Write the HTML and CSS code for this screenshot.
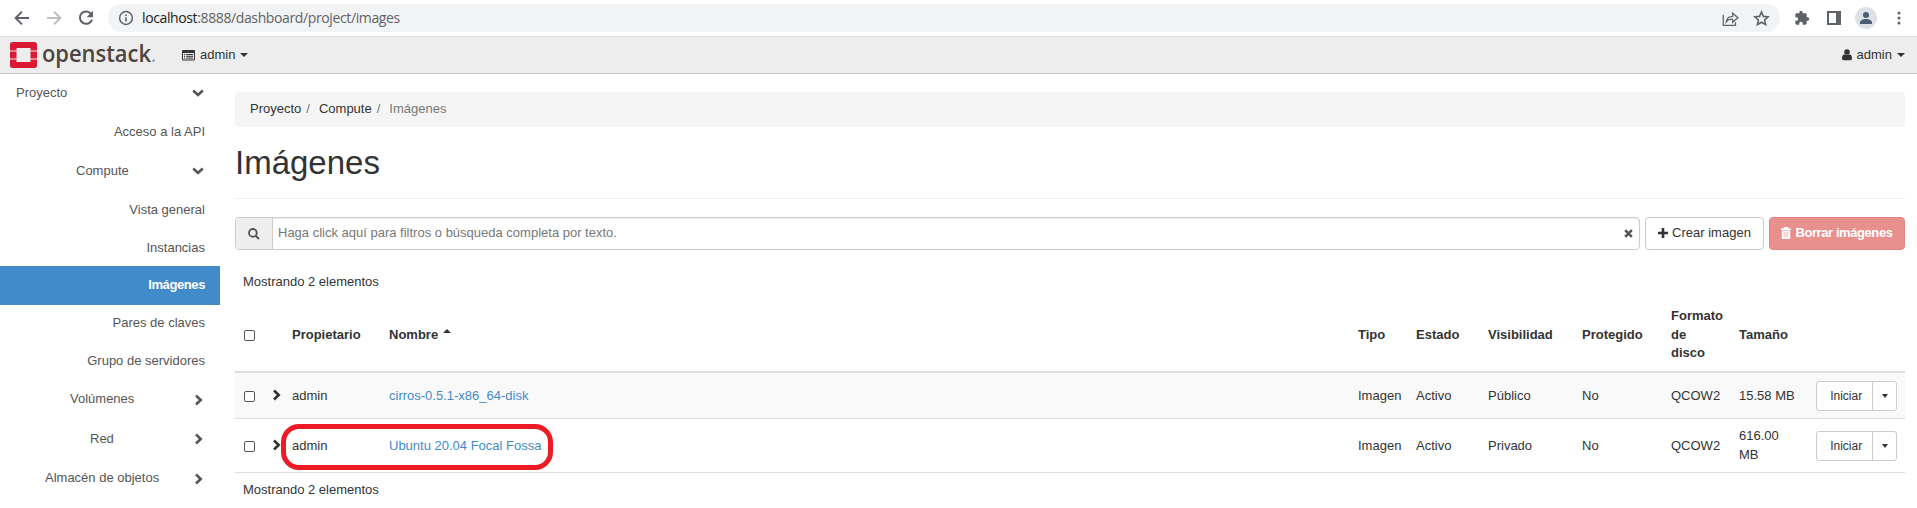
FILE: index.html
```html
<!DOCTYPE html>
<html lang="es">
<head>
<meta charset="utf-8">
<title>Imágenes - OpenStack Dashboard</title>
<link rel="stylesheet" href="styles.css">
</head>
<body>
<svg class="defs" width="0" height="0">
  <symbol id="right" viewBox="0 0 10 12"><path d="M2 1.5 6.7 6 2 10.5" fill="none" stroke="currentColor" stroke-width="2.6"/></symbol>
  <symbol id="down" viewBox="0 0 12 10"><path d="M1.2 2.5 6 7 10.8 2.5" fill="none" stroke="currentColor" stroke-width="2.6"/></symbol>
</svg>
<div class="chrome">
  <svg class="nav-ico back" viewBox="0 0 16 16"><path d="M15 8H2M8 1.6 1.6 8 8 14.4" fill="none" stroke="#5f6368" stroke-width="2"/></svg>
  <svg class="nav-ico fwd" viewBox="0 0 16 16"><path d="M1 8h13M8 1.6 14.4 8 8 14.4" fill="none" stroke="#bbbdc0" stroke-width="2"/></svg>
  <svg class="nav-ico reload" viewBox="0 0 16 16"><path d="M13.3 4.2A6.2 6.2 0 1 0 14 9.6" fill="none" stroke="#5f6368" stroke-width="2"/><path d="M15 .8v6.4H8.6z" fill="#5f6368"/></svg>
  <div class="omnibox">
    <svg class="info" viewBox="0 0 16 16"><circle cx="8" cy="8" r="6.4" fill="none" stroke="#5f6368" stroke-width="1.5"/><path d="M8 7.2v4.2M8 4.4v1.7" stroke="#5f6368" stroke-width="1.6"/></svg>
    <span class="url"><b>localhost</b>:8888/dashboard/project/images</span>
    <svg class="share" viewBox="0 0 16 16"><path d="M1.2 4.5v10h11.500v-3M4 11.200C4.500 7.500 7 6 10 6V3l5 4.300-5 4.300V8.700C7.500 8.500 5.500 9.200 4 11.200z" fill="none" stroke="#5f6368" stroke-width="1.2"/></svg>
    <svg class="star" viewBox="0 0 16 16"><path d="M8 1.900 9.800 6l4.500.4-3.400 3 1 4.400L8 11.500l-3.900 2.300 1-4.400-3.400-3L6.200 6z" fill="none" stroke="#5f6368" stroke-width="1.500"/></svg>
  </div>
  <svg class="ext" viewBox="0 0 24 24"><path fill="#5f6368" d="M20.500 11H19V7c0-1.100-.9-2-2-2h-4V3.500a2.500 2.500 0 0 0-5 0V5H4c-1.100 0-2 .9-2 2v3.800h1.500a2.700 2.700 0 0 1 0 5.400H2V20c0 1.100.9 2 2 2h3.800v-1.500a2.700 2.700 0 0 1 5.400 0V22H17c1.100 0 2-.9 2-2v-4h1.500a2.500 2.500 0 0 0 0-5z"/></svg>
  <svg class="panel" viewBox="0 0 14 14"><path fill="#5f6368" fill-rule="evenodd" d="M0 0h14v14H0zM2 2v10h7V2z"/></svg>
  <svg class="avatar" viewBox="0 0 22 22"><circle cx="11" cy="11" r="11" fill="#dee1e6"/><circle cx="11" cy="8" r="3" fill="#4d5d75"/><path d="M5 17v-1.500c0-2.200 3-3.500 6-3.500s6 1.300 6 3.500V17z" fill="#4d5d75"/></svg>
  <svg class="dots" viewBox="0 0 4 14"><g fill="#5f6368"><circle cx="2" cy="2" r="1.500"/><circle cx="2" cy="7" r="1.500"/><circle cx="2" cy="12" r="1.500"/></g></svg>
</div>
<header class="topbar">
  <svg class="logo" viewBox="0 0 150 30">
    <g fill="#da1a32"><path d="M0 8.500V2.500Q0 0 2.500 0h22Q27 0 27 2.500v6h-6.500V6h-14v2.500z"/><path d="M0 9.500h6.500v7H0zM20.500 9.500H27v7h-6.500z"/><path d="M0 17.500h6.500V20h14v-2.500H27v6Q27 26 24.500 26h-22Q0 26 0 23.500z"/></g>
    <text x="32" y="19.500" textLength="109" lengthAdjust="spacingAndGlyphs">openstack</text>
    <circle cx="143.500" cy="18.500" r="1.500" fill="#aaa"/>
  </svg>
  <span class="project">
    <svg viewBox="0 0 13 11"><path fill="#333" fill-rule="evenodd" d="M1 0h11q1 0 1 1v8.500q0 1-1 1H1q-1 0-1-1V1Q0 0 1 0zM1 3v6.500h11V3z"/><path d="M2 4.500h1.200M4.200 4.500H11M2 6.300h1.200M4.200 6.300H11M2 8.100h1.200M4.200 8.100H11" stroke="#333"/></svg>
    admin<i class="caret"></i>
  </span>
  <span class="user">
    <svg viewBox="0 0 10 12"><circle cx="5" cy="3" r="2.800" fill="#333"/><path d="M0 9.500C0 7 .9 5.500 2.500 5.300q2.500 1.600 5 0C9.100 5.500 10 7 10 9.500q0 1.800-1.700 1.800H1.700Q0 11.300 0 9.500z" fill="#333"/></svg>
    admin<i class="caret"></i>
  </span>
</header>
<div class="body">
  <nav class="side">
    <a class="h38 l1">Proyecto<svg class="ch"><use href="#down"/></svg></a>
    <a class="h39 low">Acceso a la API</a>
    <a class="h40 l2">Compute<svg class="ch"><use href="#down"/></svg></a>
    <a class="h38">Vista general</a>
    <a class="h37 low">Instancias</a>
    <a class="h39 active">Imágenes</a>
    <a class="h37">Pares de claves</a>
    <a class="h38">Grupo de servidores</a>
    <a class="h39 l3">Volúmenes<svg class="ch r"><use href="#right"/></svg></a>
    <a class="h40 l4">Red<svg class="ch r"><use href="#right"/></svg></a>
    <a class="h39 l5">Almacén de objetos<svg class="ch r"><use href="#right"/></svg></a>
  </nav>
  <main>
    <div class="crumbs"><a>Proyecto</a><i>/</i><a>Compute</a><i>/</i><span>Imágenes</span></div>
    <h1>Imágenes</h1>
    <div class="tools">
      <div class="search">
        <span class="addon"><svg viewBox="0 0 13 13"><circle cx="5.300" cy="5.300" r="4.200" fill="none" stroke="#555" stroke-width="2"/><path d="m8.300 8.300 3.600 3.600" stroke="#555" stroke-width="2.200"/></svg></span>
        <span class="ph">Haga click aquí para filtros o búsqueda completa por texto.</span>
        <svg class="clear" viewBox="0 0 10 10"><path d="m1.300 1.300 7.400 7.400M8.700 1.300 1.300 8.700" stroke="#555" stroke-width="2.800"/></svg>
      </div>
      <button class="btn create"><svg viewBox="0 0 10 10"><path d="M5 0v10M0 5h10" stroke="#333" stroke-width="2.600"/></svg>Crear imagen</button>
      <button class="btn danger"><svg viewBox="0 0 10 12"><path fill="#fff" d="M3 0h4l.6 1.500H10V3H0V1.500h2.400zM.8 3.500h8.400V11q0 1-1 1H1.800q-1 0-1-1z"/><path d="M3.200 5v5.300M5 5v5.300M6.800 5v5.300" stroke="#e7908e" stroke-width=".6"/></svg>Borrar imágenes</button>
    </div>
    <p class="count">Mostrando 2 elementos</p>
    <div class="table">
      <div class="tr th">
        <span><i class="cb"></i></span><span></span><span>Propietario</span><span>Nombre<i class="caret up"></i></span><span>Tipo</span><span>Estado</span><span>Visibilidad</span><span>Protegido</span><span>Formato<br>de<br>disco</span><span>Tamaño</span><span></span>
      </div>
      <div class="tr r1">
        <span><i class="cb"></i></span><span><svg class="ex"><use href="#right"/></svg></span><span>admin</span><span><a class="link">cirros-0.5.1-x86_64-disk</a></span><span>Imagen</span><span>Activo</span><span>Público</span><span>No</span><span>QCOW2</span><span>15.58 MB</span><span class="grp"><b>Iniciar</b><b><i class="caret"></i></b></span>
      </div>
      <div class="tr r2">
        <span><i class="cb"></i></span><span><svg class="ex"><use href="#right"/></svg></span><span>admin</span><span><a class="link">Ubuntu 20.04 Focal Fossa</a></span><span>Imagen</span><span>Activo</span><span>Privado</span><span>No</span><span>QCOW2</span><span>616.00<br>MB</span><span class="grp"><b>Iniciar</b><b><i class="caret"></i></b></span>
        <div class="mark"></div>
      </div>
    </div>
    <p class="count foot">Mostrando 2 elementos</p>
  </main>
</div>
</body>
</html>
```
FILE: styles.css
```css
* { box-sizing: border-box; }
body { margin: 0; height: 508px; overflow: hidden; background: #fff; color: #333; font: 13px/18.57px "Liberation Sans", Arial, sans-serif; }
i { font-style: normal; }
svg { display: block; flex: none; }
.defs { position: absolute; }

.chrome { display: flex; align-items: center; height: 37px; border-bottom: 1px solid #dadce0; padding-left: 14px; }
.nav-ico { width: 16px; height: 16px; margin-right: 16px; }
.reload { margin-right: 14px; }
.omnibox { display: flex; align-items: center; width: 1672px; height: 28px; border-radius: 14px; background: #f1f3f4; padding: 0 10px; }
.info { width: 16px; height: 16px; }
.url { margin: 0 auto 0 8px; font: 14px/18px "Open Sans", sans-serif; letter-spacing: -0.38px; color: #5f6368; }
.url b { font-weight: 400; color: #202124; }
.share { width: 17px; height: 17px; margin-right: 14px; }
.star { width: 17px; height: 17px; }
.ext { width: 16px; height: 16px; margin-left: 14px; }
.panel { width: 14px; height: 14px; margin-left: 17px; }
.avatar { width: 22px; height: 22px; margin-left: 14px; }
.dots { width: 4px; height: 14px; margin-left: 20px; }

.topbar { display: flex; align-items: center; height: 37px; background: #ededed; border-bottom: 1px solid #c8c8c8; padding: 0 12px 0 10px; }
.logo { width: 150px; height: 30px; margin-top: 4px; overflow: visible; }
.logo text { font: 600 24px "Open Sans", sans-serif; fill: #4d4640; }
.project, .user { display: flex; align-items: center; gap: 5px; }
.project { margin-left: 22px; }
.project svg { width: 13px; height: 11px; }
.user { margin-left: auto; }
.user svg { width: 10px; height: 12px; }
.caret { display: inline-block; border: 4px solid transparent; border-top-color: currentColor; border-bottom: 0; }
.up { border-top: 0; border-bottom: 4px solid; margin-left: 5px; vertical-align: 6px; border-left-color: transparent; border-right-color: transparent; }

.body { display: flex; }
.side { width: 220px; flex: none; color: #555; }
.side a { display: flex; align-items: center; justify-content: flex-end; padding-right: 15px; }
.h37 { height: 37px; } .h38 { height: 38px; } .h39 { height: 39px; } .h40 { height: 40px; }
.side .low { padding-top: 2px; }
.side .active { background: #428bca; color: #fff; font-weight: 700; letter-spacing: -0.4px; }
.ch { width: 12px; height: 10px; }
.ch.r { width: 10px; height: 12px; }
.side .l1 { justify-content: space-between; padding-left: 16px; padding-right: 16px; }
.side .l2, .side .l3, .side .l4, .side .l5 { justify-content: space-between; padding-right: 16px; }
.side .l2 { padding-left: 76px; }
.side .l3 { padding-left: 70px; }
.side .l4 { padding-left: 90px; }
.side .l5 { padding-left: 45px; }

main { flex: 1; padding: 18px 12px 0 15px; }
.crumbs { display: flex; height: 35px; padding: 8px 15px; background: #f5f5f5; border-radius: 4px; color: #777; }
.crumbs a { color: #333; }
.crumbs i { margin: 0 9px 0 5px; }
h1 { margin: 0 0 18px; height: 72px; padding-top: 18px; border-bottom: 1px solid #eee; font-size: 33px; line-height: 36px; font-weight: 400; }
.tools { display: flex; gap: 5px; height: 33px; }
.search { flex: 1; display: flex; align-items: center; border: 1px solid #ccc; border-radius: 4px; box-shadow: inset 0 1px 1px rgba(0, 0, 0, .075); }
.addon { display: flex; align-items: center; justify-content: center; width: 37px; height: 31px; background: #eee; border-right: 1px solid #ccc; border-radius: 3px 0 0 3px; }
.addon svg { width: 12px; height: 12px; }
.ph { margin: 0 auto 0 5px; color: #777; }
.clear { width: 9px; height: 9px; margin-right: 6px; }
.btn { display: flex; align-items: center; justify-content: center; gap: 4px; padding: 0; height: 33px; border: 1px solid #ccc; border-radius: 4px; background: #fff; color: #333; font: inherit; }
.btn svg { width: 10px; height: 10px; margin-bottom: 2px; }
.create { width: 119px; }
.danger { width: 136px; background: #e7908e; border-color: #e38583; color: #fff; font-weight: 700; letter-spacing: -0.42px; }
.btn.danger svg { height: 12px; margin-bottom: 1px; }
.count { margin: 0; height: 49px; padding: 23px 0 0 8px; }
.tr { display: grid; grid-template-columns: 33px 16px 97px 969px 58px 72px 94px 89px 68px 77px 81px; align-items: center; padding-left: 8px; border-bottom: 1px solid #ddd; position: relative; }
.th { height: 74px; border-bottom-width: 2px; font-weight: 700; }
.r1 { height: 46px; background: #f9f9f9; padding-top: 1px; }
.r2 { height: 54px; padding-top: 1px; }
.cb { display: block; width: 11px; height: 11px; margin-left: 1px; border: 1px solid #555; border-radius: 2px; background: #fff; }
.ex { width: 10px; height: 12px; margin: -2px 0 0 -4px; }
.link { color: #428bca; }
.grp { display: flex; height: 30px; border: 1px solid #ccc; border-radius: 3px; background: #fff; }
.grp b { display: flex; align-items: center; justify-content: center; width: 56px; padding-left: 3px; font-weight: 400; font-size: 12px; }
.grp b + b { width: 24px; padding: 0; border-left: 1px solid #ccc; }
.grp .caret { border-width: 4px 3.5px 0; }
.mark { position: absolute; left: 46px; top: 5px; width: 272px; height: 46px; border: 5px solid #ed1c24; border-radius: 18px; }
.foot { padding-top: 8px; height: 35px; }
```
